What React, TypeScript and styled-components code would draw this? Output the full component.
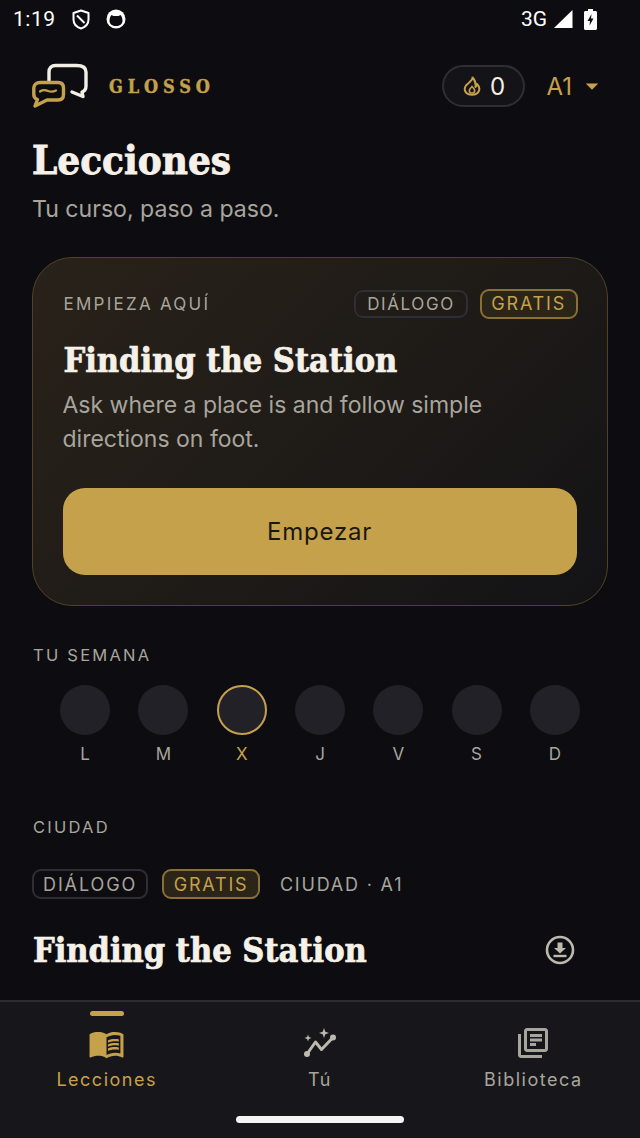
import React from "react";
import styled, { createGlobalStyle } from "styled-components";
import { MdMenuBook, MdOutlineLibraryBooks, MdArrowDropDown } from "react-icons/md";

const Global = createGlobalStyle`
  html, body { margin: 0; padding: 0; background: #0d0d11; }
  * { box-sizing: border-box; }
`;

const Screen = styled.div`
  width: 640px; height: 1138px; display: flex; flex-direction: column; overflow: hidden;
  background: #0d0d11; font-family: Inter, "Liberation Sans", sans-serif; color: #f3efe6;
`;
const StatusBar = styled.div`
  height: 38px; flex: none; display: flex; align-items: center; justify-content: space-between;
  padding: 0 43px 0 13px; font-family: Roboto, sans-serif; color: #fff;
`;
const StatusGroup = styled.div`display: flex; align-items: center;`;
const Clock = styled.span`font-size: 21px; margin-right: 16px; letter-spacing: .5px;`;
const Net = styled.span`font-size: 21px; margin-right: 6px;`;
const Main = styled.main`flex: 1; min-height: 0; overflow: hidden; padding: 0 32px;`;
const Header = styled.header`
  height: 72px; margin-top: 12px; display: flex; align-items: center;
`;
const Brand = styled.span`
  margin-left: 20px; font-family: "DejaVu Serif", serif; font-stretch: condensed; font-weight: 700; font-size: 18px;
  letter-spacing: 4.9px; color: #c6a14b; -webkit-text-stroke: .4px #c6a14b;
`;
const Streak = styled.div`
  margin-left: auto; width: 83px; height: 42px; border-radius: 21px; border: 2px solid #2e2e34;
  background: #141418; display: flex; align-items: center; justify-content: center; gap: 9px;
  font-size: 24px; color: #f3efe6;
`;
const Level = styled.div`
  margin-left: 21px; margin-right: 1px; display: flex; align-items: center; gap: 5px; color: #c6a14b; font-size: 24px;
`;
const Heading = styled.h2`
  margin: 0; font-family: "DejaVu Serif", serif; font-stretch: condensed; font-weight: 700; color: #f5f1e8;
`;
const PageTitle = styled(Heading).attrs({ as: "h1" })`
  margin: 13px 0 0; font-size: 40px; line-height: 50px; -webkit-text-stroke: .8px #f5f1e8;
`;
const Subtitle = styled.p`margin: 8px 0 0; font-size: 23.1px; line-height: 32px; color: #a8a59c;`;
const Hero = styled.section`
  margin-top: 32px; height: 349px; border-radius: 40px; border: 1.5px solid #4f4226; padding: 30.500px 29.500px;
  background: linear-gradient(135deg, #29221a 0%, #1f1b17 50%, #131316 100%);
`;
const HeroTop = styled.div`display: flex; align-items: center; justify-content: space-between; height: 30px;`;
const Eyebrow = styled.div`
  margin-left: 1px; font-size: 17px; letter-spacing: 2.25px; color: #a8a59c; line-height: 22px;
`;
const Badges = styled.div`display: flex; align-items: center; gap: 12px;`;
const Badge = styled.span<{ $gold?: boolean; $small?: boolean }>`
  display: inline-flex; align-items: center; justify-content: center;
  padding: 0 ${(p) => (p.$gold ? 9.5 : 9)}px; height: 30px; border-radius: 9px;
  font-size: 18px; letter-spacing: ${(p) => (p.$gold ? 1.8 : 1.9)}px;
  color: ${(p) => (p.$gold ? "#c6a14b" : "#a8a59c")};
  border: 2px solid ${(p) => (p.$gold ? "#8a7035" : "#2e2e36")};
  background: ${(p) => (p.$gold ? "#2b2519" : "transparent")};
  ${(p) => p.$small && "font-size: 17px; letter-spacing: 1.6px; height: 28px; padding: 0 11px;"}
`;
const CardTitle = styled(Heading)`
  margin: 19px 0 0 1px; font-size: 34px; line-height: 44px; -webkit-text-stroke: .7px #f5f1e8;
`;
const HeroDesc = styled.p`margin: 6px 0 0; font-size: 23px; line-height: 34px; color: #a8a59c;`;
const Cta = styled.button`
  display: block; width: 514px; height: 87px; margin-top: 32px; border: 0; border-radius: 22px; background: #c6a14b;
  font-family: Inter, sans-serif; font-size: 24px; letter-spacing: .8px; color: #1b1812;
`;
const SectionLabel = styled.div`
  margin: 38px 0 0 1px; font-size: 16.5px; letter-spacing: 2.25px; line-height: 22px; color: #a8a59c;
`;
const Week = styled.div`
  margin: 19px 14px 51px; display: grid; grid-template-columns: repeat(7, 1fr);
`;
const Day = styled.div`display: flex; flex-direction: column; align-items: center; gap: 8px;`;
const Dot = styled.div<{ $today?: boolean }>`
  width: 50px; height: 50px; border-radius: 50%; background: #222127;
  border: ${(p) => (p.$today ? "2px solid #c6a14b" : "0")};
`;
const DayName = styled.span<{ $today?: boolean }>`
  font-size: 17px; line-height: 22px; color: ${(p) => (p.$today ? "#c6a14b" : "#a8a59c")};
`;
const TagRow = styled.div`margin-top: 31px; display: flex; align-items: center; gap: 14px;`;
const Meta = styled.span`margin-left: 6px; font-size: 18px; letter-spacing: 1.8px; color: #a8a59c;`;
const LessonRow = styled.div`margin-top: 29px; display: flex; align-items: center; justify-content: space-between; padding-right: 33px;`;
const LessonTitle = styled(CardTitle)`margin: 0 0 0 1px;`;
const Nav = styled.nav`
  flex: none; height: 138px; background: #17171b; border-top: 2px solid #2c2c31; position: relative;
  display: grid; grid-template-columns: repeat(3, 1fr); padding-top: 23px;
`;
const Tab = styled.div<{ $active?: boolean }>`
  display: flex; flex-direction: column; align-items: center; position: relative;
  color: ${(p) => (p.$active ? "#c6a14b" : "#a8a59c")};
`;
const TabIcon = styled.div`height: 36px; display: flex; align-items: center; justify-content: center;`;
const TabLabel = styled.span`margin-top: 7px; font-size: 18px; line-height: 24px; letter-spacing: 1.5px;`;
const Indicator = styled.div`
  position: absolute; top: -14px; left: 50%; margin-left: -17px; width: 34px; height: 5px; border-radius: 3px; background: #c6a14b;
`;
const HomeBar = styled.div`
  position: absolute; left: 236px; bottom: 15px; width: 168px; height: 7px; border-radius: 4px; background: #f4f4f4;
`;

const Logo = () => (
  <svg width="57" height="48" viewBox="0 0 57 48" fill="none" aria-hidden>
    <path d="M17 20V10c0-4 2.500-6.500 6.500-6.500h21C51 3.500 54 6 54 10v14c0 3-1 5-4 6l1 4.500-11-4.500"
      stroke="#f3efe6" strokeWidth="3.400" strokeLinecap="round" strokeLinejoin="round" />
    <path d="M8 20.500h18c3.500 0 5.500 2 5.500 5.500v6.500c0 3.500-2 5.500-5.500 5.500H15l-12 6 2.500-6.500C3 36.500 1.800 35 1.800 32.500V26c0-3.500 2.700-5.500 6.200-5.500z"
      stroke="#c6a14b" strokeWidth="3.400" strokeLinejoin="round" />
    <path d="M8 29.500c3-2 5.500-1.500 8 -.500s5 1 8-.500" stroke="#c6a14b" strokeWidth="2.200" strokeLinecap="round" />
  </svg>
);
const Shield = () => (
  <svg width="18" height="21" viewBox="0 0 18 21" fill="none" aria-hidden style={{ marginRight: 16 }}>
    <path d="M9 1.500 16.500 4v6.500c0 4.500-3 7.500-7.500 9-4.500-1.500-7.500-4.500-7.500-9V4z" stroke="#fff" strokeWidth="2" strokeLinejoin="round" />
    <path d="M5 6.500l7.500 7.500" stroke="#fff" strokeWidth="2" />
  </svg>
);
const Cat = () => (
  <svg width="20" height="20" viewBox="0 0 20 20" aria-hidden>
    <circle cx="10" cy="10" r="9.500" fill="#fff" />
    <path d="M3.500 12c0-3 1-5 2-6l2 1h5l2-1c1 1 2 3 2 6 0 3-3 5-6.500 5s-6.500-2-6.500-5z" fill="#0d0d11" />
  </svg>
);
const Signal = () => (
  <svg width="20" height="20" viewBox="0 0 20 20" aria-hidden style={{ marginRight: 11 }}>
    <path d="M19.500 1v18H1z" fill="#fff" />
  </svg>
);
const Battery = () => (
  <svg width="13" height="21" viewBox="0 0 13 21" aria-hidden>
    <path d="M4 0h5v2h2.500c.8 0 1.500.700 1.500 1.500V19.500c0 .8-.7 1.500-1.500 1.500h-10C.7 21 0 20.300 0 19.500V3.500C0 2.700.7 2 1.500 2H4z" fill="#fff" />
    <path d="M7.500 5 3.500 12h2.500l-.5 4.500 4-7H7z" fill="#0d0d11" />
  </svg>
);
const Flame = () => (
  <svg width="18" height="20" viewBox="0 0 18 20" fill="none" aria-hidden>
    <path d="M9.500 1.500c.5 3-4 5-6.500 8-1.500 2-1.500 4 -.8 5.800C3.300 17.500 6 18.800 9 18.800s5.700-1.300 6.800-3.500c1-2.300.5-5-1.800-7.300 0 1.500-.5 2.500-1.500 3C13 7.500 12 4 9.500 1.500z"
      stroke="#c6a14b" strokeWidth="2" strokeLinejoin="round" />
    <path d="M9 10.500c-1.500 1.500-2.700 2.700-2.700 4.200 0 1.500 1.200 2.300 2.700 2.300s2.700-.8 2.700-2.300c0-1.500-1.200-2.700-2.700-4.200z" stroke="#c6a14b" strokeWidth="1.600" />
  </svg>
);
const Download = () => (
  <svg width="30" height="30" viewBox="0 0 30 30" fill="none" aria-hidden>
    <circle cx="15" cy="15" r="13" stroke="#bdb9ae" strokeWidth="2.600" />
    <path d="M12.500 7.500h5V13h3.500L15 18.500 9 13h3.500z" fill="#bdb9ae" />
    <path d="M8.500 21h13" stroke="#bdb9ae" strokeWidth="2.400" />
  </svg>
);
const Insights = () => (
  <svg width="34" height="32" viewBox="0 0 34 32" aria-hidden fill="none">
    <path d="M4 27 12.500 15 18.500 22.500 30 10.500" stroke="#bdb9ae" strokeWidth="3" strokeLinejoin="round" strokeLinecap="round" />
    <circle cx="4" cy="27" r="3" fill="#bdb9ae" />
    <circle cx="30" cy="10.500" r="3" fill="#bdb9ae" />
    <path d="M21 1l1.300 3.700L26 6l-3.700 1.300L21 11l-1.300-3.700L16 6l3.700-1.300zM5 7.500l.9 2.600 2.600.9-2.600.9L5 14.500l-.9-2.600L1.500 11l2.600-.9z" fill="#bdb9ae" />
  </svg>
);

const days = ["L", "M", "X", "J", "V", "S", "D"];

export default function App() {
  return (
    <Screen>
      <Global />
      <StatusBar>
        <StatusGroup>
          <Clock>1:19</Clock>
          <Shield />
          <Cat />
        </StatusGroup>
        <StatusGroup>
          <Net>3G</Net>
          <Signal />
          <Battery />
        </StatusGroup>
      </StatusBar>
      <Main>
        <Header>
          <Logo />
          <Brand>GLOSSO</Brand>
          <Streak>
            <Flame />
            <span>0</span>
          </Streak>
          <Level>
            A1 <MdArrowDropDown size={30} />
          </Level>
        </Header>
        <PageTitle>Lecciones</PageTitle>
        <Subtitle>Tu curso, paso a paso.</Subtitle>
        <Hero>
          <HeroTop>
            <Eyebrow>EMPIEZA AQUÍ</Eyebrow>
            <Badges>
              <Badge $small>DIÁLOGO</Badge>
              <Badge $gold>GRATIS</Badge>
            </Badges>
          </HeroTop>
          <CardTitle>Finding the Station</CardTitle>
          <HeroDesc>
            Ask where a place is and follow simple
            <br />
            directions on foot.
          </HeroDesc>
          <Cta>Empezar</Cta>
        </Hero>
        <SectionLabel>TU SEMANA</SectionLabel>
        <Week>
          {days.map((d) => (
            <Day key={d}>
              <Dot $today={d === "X"} />
              <DayName $today={d === "X"}>{d}</DayName>
            </Day>
          ))}
        </Week>
        <SectionLabel>CIUDAD</SectionLabel>
        <TagRow>
          <Badge>DIÁLOGO</Badge>
          <Badge $gold>GRATIS</Badge>
          <Meta>CIUDAD · A1</Meta>
        </TagRow>
        <LessonRow>
          <LessonTitle>Finding the Station</LessonTitle>
          <Download />
        </LessonRow>
      </Main>
      <Nav>
        <Tab $active>
          <Indicator />
          <TabIcon><MdMenuBook size={37} /></TabIcon>
          <TabLabel>Lecciones</TabLabel>
        </Tab>
        <Tab>
          <TabIcon><Insights /></TabIcon>
          <TabLabel>Tú</TabLabel>
        </Tab>
        <Tab>
          <TabIcon><MdOutlineLibraryBooks size={36} /></TabIcon>
          <TabLabel>Biblioteca</TabLabel>
        </Tab>
        <HomeBar />
      </Nav>
    </Screen>
  );
}
